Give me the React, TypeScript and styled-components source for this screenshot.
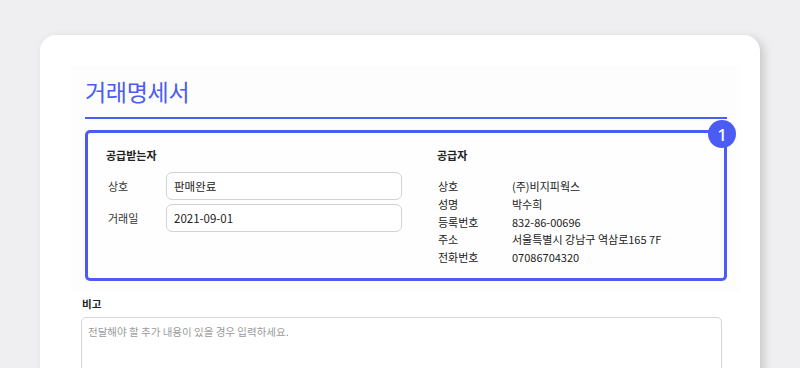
import React from "react";
import styled, { createGlobalStyle } from "styled-components";

const GlobalStyle = createGlobalStyle`
  html, body {
    margin: 0;
    padding: 0;
    background: #efeff1;
    font-family: "Noto Sans CJK KR", "Noto Sans", sans-serif;
    color: #222;
  }
  * { box-sizing: border-box; }
`;

const supplier = [
  { label: "상호", value: "(주)비지피웍스" },
  { label: "성명", value: "박수희" },
  { label: "등록번호", value: "832-86-00696" },
  { label: "주소", value: "서울특별시 강남구 역삼로165 7F" },
  { label: "전화번호", value: "07086704320" },
];

const App = () => {
  return (
    <Page>
      <GlobalStyle />
      <Card>
        <Highlight>
          <Title>거래명세서</Title>
          <Divider />
          <InfoBox>
            <Badge>1</Badge>
            <Column>
              <Heading>공급받는자</Heading>
              <Fields>
                <FieldRow>
                  <FieldLabel>상호</FieldLabel>
                  <Input defaultValue="판매완료" />
                </FieldRow>
                <FieldRow>
                  <FieldLabel>거래일</FieldLabel>
                  <Input defaultValue="2021-09-01" />
                </FieldRow>
              </Fields>
            </Column>
            <Column>
              <Heading>공급자</Heading>
              <InfoList>
                {supplier.map(({ label, value }) => (
                  <InfoRow key={label}>
                    <span>{label}</span>
                    <span>{value}</span>
                  </InfoRow>
                ))}
              </InfoList>
            </Column>
          </InfoBox>
        </Highlight>
        <NoteLabel>비고</NoteLabel>
        <NoteArea placeholder="전달해야 할 추가 내용이 있을 경우 입력하세요." />
      </Card>
    </Page>
  );
};

export default App;

const Page = styled.div`
  width: 800px;
  height: 368px;
  overflow: hidden;
  padding: 35px 40px 0 40px;
`;

const Card = styled.div`
  height: 360px;
  background: #ffffff;
  border-radius: 16px 16px 0 0;
  box-shadow: 4px 3px 10px rgba(0, 0, 0, 0.16);
  padding: 31px 38px 0 41px;
`;

const Highlight = styled.div`
  margin: 0 -18px 0 -11px;
  padding: 8px 13px 10px 15px;
  background: #fdfdfd;
`;

const Title = styled.h1`
  margin: 0;
  font-size: 23px;
  line-height: 34px;
  font-weight: 400;
  color: #4a5cf4;
  letter-spacing: -0.3px;
`;

const Divider = styled.div`
  height: 2px;
  background: #4a5cf4;
  margin-top: 9px;
`;

const InfoBox = styled.div`
  position: relative;
  margin-top: 11px;
  height: 151px;
  border: 3px solid #4a5cf4;
  border-radius: 5px;
  padding: 14px 18px 0 18px;
  display: grid;
  grid-template-columns: 296px 1fr;
  column-gap: 35px;
  background: #fefefe;
`;

const Badge = styled.div`
  position: absolute;
  top: -13px;
  right: -12px;
  width: 28px;
  height: 28px;
  border-radius: 50%;
  background: #4a5cf4;
  color: #fff;
  display: grid;
  place-items: center;
  font-size: 17px;
  font-weight: 500;
  font-family: "Noto Sans", sans-serif;
`;

const Column = styled.div`
  display: flex;
  flex-direction: column;
`;

const Heading = styled.div`
  font-size: 11px;
  font-weight: 700;
  line-height: 16px;
  color: #222;
`;

const Fields = styled.div`
  margin-top: 9px;
  display: flex;
  flex-direction: column;
  gap: 4px;
`;

const FieldRow = styled.div`
  display: flex;
  align-items: center;
`;

const FieldLabel = styled.div`
  width: 60px;
  padding-left: 2px;
  font-size: 11px;
  color: #333;
`;

const Input = styled.input`
  flex: 1;
  height: 28px;
  border: 1px solid #d3d3d6;
  border-radius: 6px;
  padding: 0 7px;
  font-family: "Noto Sans CJK KR", "Noto Sans", sans-serif;
  font-size: 11.5px;
  color: #222;
  background: #fff;
  outline: none;
`;

const InfoList = styled.div`
  margin-top: 15px;
  display: flex;
  flex-direction: column;
`;

const InfoRow = styled.div`
  display: grid;
  grid-template-columns: 74px 1fr;
  padding-left: 1px;
  font-size: 11px;
  line-height: 17.5px;
  height: 17.75px;
  color: #222;
`;

const NoteLabel = styled.div`
  margin-top: 5px;
  padding-left: 1px;
  font-size: 10.5px;
  font-weight: 700;
  line-height: 16px;
  color: #222;
`;

const NoteArea = styled.textarea`
  display: block;
  width: 100%;
  height: 60px;
  margin-top: 5px;
  border: 1px solid #d6d6d8;
  border-radius: 5px;
  padding: 6px 6px;
  font-family: "Noto Sans CJK KR", "Noto Sans", sans-serif;
  font-size: 10.5px;
  background: #fff;
  outline: none;
  resize: vertical;
  &::placeholder {
    color: #9a9a9a;
  }
`;
